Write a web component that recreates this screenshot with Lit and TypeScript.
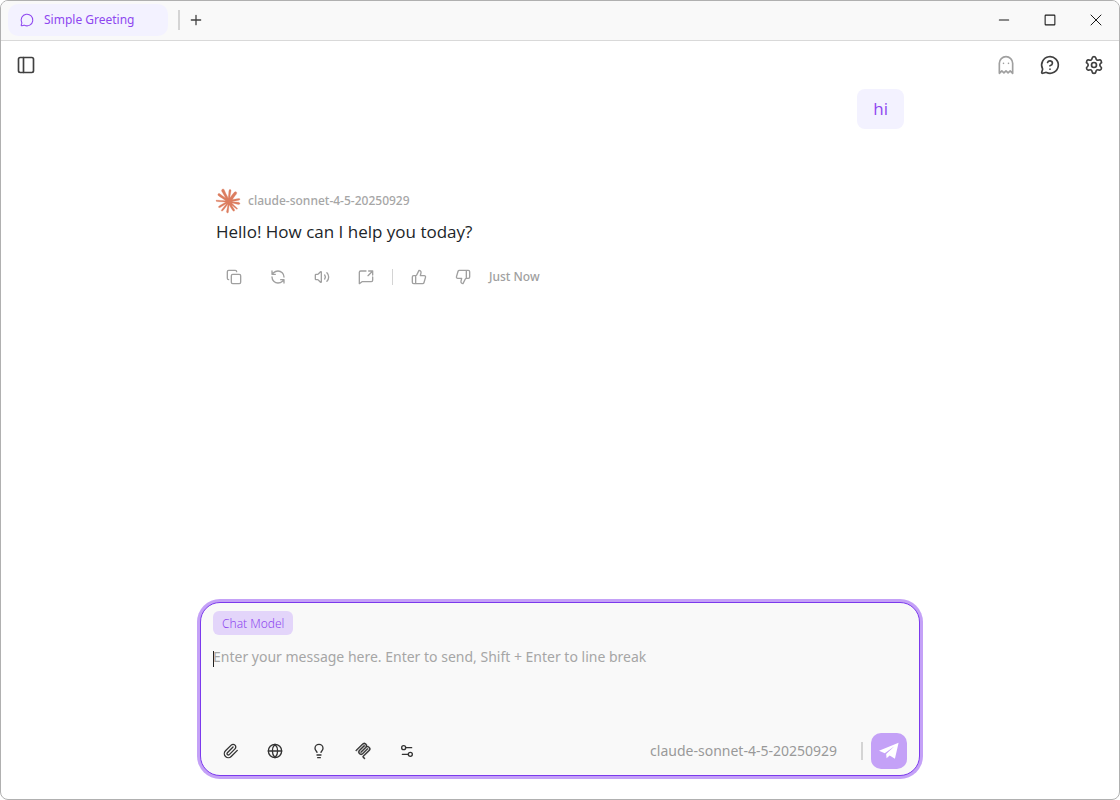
import { LitElement, html, css, svg } from "lit";
import { customElement, property, state } from "lit/decorators.js";

const icons: Record<string, unknown> = {
  chat: svg`<path d="M2.992 16.342a2 2 0 0 1 .094 1.167l-1.065 3.29a1 1 0 0 0 1.236 1.168l3.413-.998a2 2 0 0 1 1.099.092 10 10 0 1 0-4.777-4.719"/>`,
  plus: svg`<path d="M4 12h16M12 4v16"/>`,
  minimize: svg`<path d="M4 12h16"/>`,
  maximize: svg`<rect x="4.7" y="4.7" width="14.6" height="14.6" rx="1"/>`,
  close: svg`<path d="M4.5 4.5l15 15M19.5 4.5l-15 15"/>`,
  panel: svg`<rect x="3" y="3" width="18" height="18" rx="2"/><path d="M9 3v18"/>`,
  ghost: svg`<path d="M9 10h.01M15 10h.01M12 2a8 8 0 0 0-8 8v12l3-3 2.5 2.5L12 19l2.5 2.5L17 19l3 3V10a8 8 0 0 0-8-8z"/>`,
  help: svg`<path d="M2.992 16.342a2 2 0 0 1 .094 1.167l-1.065 3.29a1 1 0 0 0 1.236 1.168l3.413-.998a2 2 0 0 1 1.099.092 10 10 0 1 0-4.777-4.719"/><path d="M9.09 9a3 3 0 0 1 5.83 1c0 2-3 3-3 3M12 17h.01"/>`,
  settings: svg`<path d="M9.671 4.136a2.34 2.34 0 0 1 4.659 0 2.34 2.34 0 0 0 3.319 1.915 2.34 2.34 0 0 1 2.33 4.033 2.34 2.34 0 0 0 0 3.831 2.34 2.34 0 0 1-2.33 4.033 2.34 2.34 0 0 0-3.319 1.915 2.34 2.34 0 0 1-4.659 0 2.34 2.34 0 0 0-3.32-1.915 2.34 2.34 0 0 1-2.33-4.033 2.34 2.34 0 0 0 0-3.831A2.34 2.34 0 0 1 6.35 6.051a2.34 2.34 0 0 0 3.319-1.915"/><circle cx="12" cy="12" r="3"/>`,
  copy: svg`<rect x="8" y="8" width="14" height="14" rx="2"/><path d="M4 16c-1.1 0-2-.9-2-2V4c0-1.1.9-2 2-2h10c1.1 0 2 .9 2 2"/>`,
  refresh: svg`<path d="M21 12a9 9 0 0 0-9-9 9.75 9.75 0 0 0-6.74 2.74L3 8M3 3v5h5M3 12a9 9 0 0 0 9 9 9.75 9.75 0 0 0 6.74-2.74L21 16M16 16h5v5"/>`,
  volume: svg`<path d="M11 4.702a.705.705 0 0 0-1.203-.498L6.413 7.587A1.4 1.4 0 0 1 5.416 8H3a1 1 0 0 0-1 1v6a1 1 0 0 0 1 1h2.416a1.4 1.4 0 0 1 .997.413l3.383 3.384A.705.705 0 0 0 11 19.298zM16 9a5 5 0 0 1 0 6M19.364 18.364a9 9 0 0 0 0-12.728"/>`,
  share: svg`<path d="M22 12v5a2 2 0 0 1-2 2H6l-4 3V5a2 2 0 0 1 2-2h8M16 3h6v6M15 10l7-7"/>`,
  up: svg`<path d="M7 10v12M15 5.88 14 10h5.83a2 2 0 0 1 1.92 2.56l-2.33 8A2 2 0 0 1 17.5 22H4a2 2 0 0 1-2-2v-8a2 2 0 0 1 2-2h2.76a2 2 0 0 0 1.79-1.11L12 2a3.13 3.13 0 0 1 3 3.88Z"/>`,
  down: svg`<path d="M17 14V2M9 18.12 10 14H4.17a2 2 0 0 1-1.92-2.56l2.33-8A2 2 0 0 1 6.5 2H20a2 2 0 0 1 2 2v8a2 2 0 0 1-2 2h-2.76a2 2 0 0 0-1.79 1.11L12 22a3.13 3.13 0 0 1-3-3.88Z"/>`,
  clip: svg`<path d="m21.44 11.05-9.19 9.19a6 6 0 0 1-8.49-8.49l8.57-8.57A4 4 0 1 1 18 8.84l-8.59 8.57a2 2 0 0 1-2.83-2.83l8.49-8.48"/>`,
  globe: svg`<circle cx="12" cy="12" r="10"/><path d="M12 2a14.5 14.5 0 0 0 0 20 14.5 14.5 0 0 0 0-20M2 12h20"/>`,
  bulb: svg`<path d="M15 14c.2-1 .7-1.7 1.5-2.5 1-.9 1.5-2.2 1.5-3.5A6 6 0 0 0 6 8c0 1 .2 2.2 1.5 3.5.7.7 1.3 1.5 1.5 2.5M9 18h6M10 22h4"/>`,
  sliders: svg`<path d="M14 17H5M19 7h-9"/><circle cx="17" cy="17" r="3"/><circle cx="7" cy="7" r="3"/>`,
  mcp: svg`<g fill="currentColor" stroke-width="0.6"><path d="M15.688 2.343a2.588 2.588 0 00-3.61 0l-9.626 9.44a.863.863 0 01-1.203 0 .823.823 0 010-1.18l9.626-9.44a4.313 4.313 0 016.016 0 4.116 4.116 0 011.204 3.54 4.3 4.3 0 013.609 1.18l.05.05a4.115 4.115 0 010 5.9l-8.706 8.537a.274.274 0 000 .393l1.788 1.754a.823.823 0 010 1.18.863.863 0 01-1.203 0l-1.788-1.753a1.92 1.92 0 010-2.754l8.706-8.538a2.47 2.47 0 000-3.54l-.05-.049a2.588 2.588 0 00-3.607-.003l-7.172 7.034-.002.002-.098.097a.863.863 0 01-1.204 0 .823.823 0 010-1.18l7.273-7.133a2.47 2.47 0 00-.003-3.537z"/><path d="M14.485 4.703a.823.823 0 000-1.18.863.863 0 00-1.204 0l-7.119 6.982a4.115 4.115 0 000 5.9 4.314 4.314 0 006.016 0l7.12-6.982a.823.823 0 000-1.18.863.863 0 00-1.204 0l-7.119 6.982a2.588 2.588 0 01-3.61 0 2.47 2.47 0 010-3.54l7.12-6.982z"/></g>`,
  send: svg`<g fill="currentColor" stroke="none"><path d="M23.5 2 0 11.8l6.9 3L18.5 6.3 8.6 15.6l.5 5.2 3.7-3.3 6.3 3.9z"/></g>`,
  claude: svg`<path fill="currentColor" stroke-width="0.3" d="M4.709 15.955l4.72-2.647.08-.23-.08-.128H9.2l-.79-.048-2.698-.073-2.339-.097-2.266-.122-.571-.121L0 11.784l.055-.352.48-.321.686.06 1.52.103 2.278.158 1.652.097 2.449.255h.389l.055-.157-.134-.098-.103-.097-2.358-1.596-2.552-1.688-1.336-.972-.724-.491-.364-.462-.158-1.008.656-.722.881.06.225.061.893.686 1.908 1.476 2.491 1.833.365.304.145-.103.019-.073-.164-.274-1.355-2.446-1.446-2.49-.644-1.032-.17-.619a2.97 2.97 0 01-.104-.729L6.283.134 6.696 0l.996.134.42.364.62 1.414 1.002 2.229 1.555 3.03.456.898.243.832.091.255h.158V9.01l.128-1.706.237-2.095.23-2.695.08-.76.376-.91.747-.492.584.28.48.685-.067.444-.286 1.851-.559 2.903-.364 1.942h.212l.243-.242.985-1.306 1.652-2.064.73-.82.85-.904.547-.431h1.033l.76 1.129-.34 1.166-1.064 1.347-.881 1.142-1.264 1.7-.79 1.36.073.11.188-.02 2.856-.606 1.543-.28 1.841-.315.833.388.091.395-.328.807-1.969.486-2.309.462-3.439.813-.042.03.049.061 1.549.146.662.036h1.622l3.02.225.79.522.474.638-.079.485-1.215.62-1.64-.389-3.829-.91-1.312-.329h-.182v.11l1.093 1.068 2.006 1.81 2.509 2.33.127.578-.322.455-.34-.049-2.205-1.657-.851-.747-1.926-1.62h-.128v.17l.444.649 2.345 3.521.122 1.08-.17.353-.608.213-.668-.122-1.374-1.925-1.415-2.167-1.143-1.943-.14.08-.674 7.254-.316.37-.729.28-.607-.461-.322-.747.322-1.476.389-1.924.315-1.53.286-1.9.17-.632-.012-.042-.14.018-1.434 1.967-2.18 2.945-1.726 1.845-.414.164-.717-.37.067-.662.401-.589 2.388-3.036 1.44-1.882.93-1.086-.006-.158h-.055L4.132 18.56l-1.13.146-.487-.456.061-.746.231-.243 1.908-1.312-.006.006z"/>`,
};

@customElement("ui-icon")
export class UiIcon extends LitElement {
  @property() name = "";
  @property({ type: Number }) size = 16;
  @property({ type: Number }) weight = 2;

  static styles = css`
    :host { display: inline-flex; flex: none; }
    .glyph {
      display: block;
      fill: none;
      stroke: currentColor;
      stroke-linecap: round;
      stroke-linejoin: round;
      overflow: visible;
    }
  `;

  render() {
    return html`<svg class="glyph" viewBox="0 0 24 24" width=${this.size} height=${this.size}
      stroke-width=${this.weight} aria-hidden="true">${icons[this.name]}</svg>`;
  }
}

@customElement("app-root")
export class AppRoot extends LitElement {
  @state() private draft = "";
  private model = "claude-sonnet-4-5-20250929";

  static styles = css`
    :host {
      display: block;
      font-family: "Noto Sans", "Open Sans", sans-serif;
      font-size: 16px;
      color: #212529;
      background: #fff;
    }
    * { box-sizing: border-box; }
    button {
      font: inherit;
      color: inherit;
      background: none;
      border: 0;
      padding: 0;
      display: inline-flex;
      align-items: center;
      justify-content: center;
      cursor: pointer;
    }
    .window {
      display: flex;
      flex-direction: column;
      min-height: 100vh;
      border: 1px solid #b0b0b0;
      border-radius: 8px;
      overflow: hidden;
    }
    .titlebar {
      display: flex;
      align-items: center;
      height: 40px;
      padding: 0 0 2px 7px;
      background: #f9f9f9;
      border-bottom: 1px solid #d9d9d9;
    }
    .tab {
      width: 160px;
      height: 32px;
      justify-content: flex-start;
      gap: 10px;
      padding: 0 12px;
      border-radius: 10px;
      background: #f3f2ff;
      color: #8e47f0;
      font-size: 12px;
    }
    .rule { flex: none; width: 1px; background: #d4d4d4; }
    .rule.tabs { width: 2px; height: 20px; margin: 0 8px 0 10px; }
    .add { width: 16px; height: 24px; color: #404040; }
    .controls { display: flex; margin-left: auto; color: #1a1a1a; }
    .controls button { width: 46px; height: 38px; }
    .toolbar {
      display: flex;
      align-items: center;
      justify-content: space-between;
      height: 48px;
      padding: 0 7px;
      color: #404040;
    }
    .toolbar button { width: 36px; height: 36px; }
    .tools { display: flex; gap: 8px; }
    .toolbar .muted { color: #a0a0a0; }
    .thread {
      flex: 1;
      width: 100%;
      max-width: 688px;
      margin: 0 auto;
      display: flex;
      flex-direction: column;
    }
    .bubble, .text { font-family: "Open Sans", "Noto Sans", sans-serif; font-size: 17px; }
    .bubble {
      align-self: flex-end;
      height: 40px;
      padding: 0 16px;
      line-height: 40px;
      border-radius: 8px;
      background: #f3f2ff;
      color: #8e47f0;
    }
    .reply { margin-top: 60px; }
    .author {
      display: flex;
      align-items: center;
      gap: 8px;
      height: 24px;
      color: #a6a6a6;
      font-size: 12px;
      font-weight: 500;
    }
    .label { padding-bottom: 2px; }
    .brand { color: #dc7d5f; }
    .text { margin: 6px 0 0; line-height: 26px; }
    .actions {
      display: flex;
      align-items: center;
      gap: 8px;
      margin-top: 14px;
      color: #a0a0a0;
      font-size: 12px;
      font-weight: 500;
    }
    .actions button, .options button { width: 36px; height: 36px; }
    .actions .rule { height: 16px; }
    .composer {
      position: relative;
      width: calc(100% - 32px);
      max-width: 720px;
      margin: 0 auto 23px;
      padding: 8px 12px 6px;
      display: flex;
      flex-direction: column;
      border: 1px solid #7c3aed;
      border-radius: 20px;
      background: #f9f9f9;
      box-shadow: 0 0 0 3px #c4a1f7;
    }
    .tag {
      align-self: flex-start;
      height: 24px;
      padding: 0 9px;
      line-height: 26px;
      border-radius: 6px;
      background: #e3d5fa;
      color: #8e47f0;
      font-size: 12px;
      font-weight: 300;
    }
    .field { position: relative; display: flex; margin-top: 10px; }
    .message {
      flex: 1;
      height: 88px;
      padding: 0;
      border: 0;
      outline: 0;
      resize: none;
      background: none;
      color: #212529;
      font: inherit;
      font-size: 14px;
      line-height: 24px;
    }
    .message::placeholder { color: #a6a6a6; opacity: 1; }
    .caret { position: absolute; left: 0; top: 6px; width: 1px; height: 16px; background: #222; }
    .footer { display: flex; align-items: center; justify-content: space-between; }
    .options { display: flex; gap: 8px; color: #333; }
    .submit { display: flex; align-items: center; gap: 8px; }
    .submit .model { color: #999; font-size: 14px; padding: 0 16px 2px 0; }
    .submit .rule { width: 2px; height: 18px; }
    .submit .send { width: 36px; height: 36px; border-radius: 10px; background: #c4a1f7; color: #fff; }
  `;

  private action(name: string, label: string, size = 16, weight = 2, cls = "") {
    return html`<button type="button" class=${cls} aria-label=${label}>
      <ui-icon name=${name} size=${size} weight=${weight}></ui-icon>
    </button>`;
  }

  render() {
    return html`
      <div class="window">
        <header class="titlebar">
          <button type="button" class="tab">
            <ui-icon name="chat" size="14" weight="1.8"></ui-icon>Simple Greeting
          </button>
          <span class="rule tabs"></span>
          ${this.action("plus", "New tab", 14, 2.2, "add")}
          <div class="controls">
            ${this.action("minimize", "Minimize", 14, 1.8)}
            ${this.action("maximize", "Maximize", 16, 1.6)}
            ${this.action("close", "Close", 16, 1.5)}
          </div>
        </header>
        <nav class="toolbar">
          ${this.action("panel", "Toggle sidebar", 20)}
          <div class="tools">
            ${this.action("ghost", "Private chat", 20, 2, "muted")}
            ${this.action("help", "Help", 20)}
            ${this.action("settings", "Settings", 20)}
          </div>
        </nav>
        <main class="thread">
          <div class="bubble">hi</div>
          <article class="reply">
            <div class="author">
              <ui-icon class="brand" name="claude" size="24"></ui-icon>
              <span class="label">${this.model}</span>
            </div>
            <p class="text">Hello! How can I help you today?</p>
            <div class="actions">
              ${this.action("copy", "Copy")}
              ${this.action("refresh", "Regenerate")}
              ${this.action("volume", "Read aloud")}
              ${this.action("share", "Share")}
              <span class="rule"></span>
              ${this.action("up", "Good response")}
              ${this.action("down", "Bad response")}
              <span class="label">Just Now</span>
            </div>
          </article>
        </main>
        <form class="composer" @submit=${(e: Event) => e.preventDefault()}>
          <span class="tag">Chat Model</span>
          <div class="field">
            <textarea class="message" aria-label="Message" .value=${this.draft}
              @input=${(e: Event) => (this.draft = (e.target as HTMLTextAreaElement).value)}
              placeholder="Enter your message here. Enter to send, Shift + Enter to line break"></textarea>
            <span class="caret"></span>
          </div>
          <div class="footer">
            <div class="options">
              ${this.action("clip", "Attach file")}
              ${this.action("globe", "Web search")}
              ${this.action("bulb", "Reasoning")}
              ${this.action("mcp", "MCP servers")}
              ${this.action("sliders", "Parameters")}
            </div>
            <div class="submit">
              <button type="button" class="model">${this.model}</button>
              <span class="rule"></span>
              <button type="submit" class="send" aria-label="Send">
                <ui-icon name="send" size="20"></ui-icon>
              </button>
            </div>
          </div>
        </form>
      </div>
    `;
  }
}
